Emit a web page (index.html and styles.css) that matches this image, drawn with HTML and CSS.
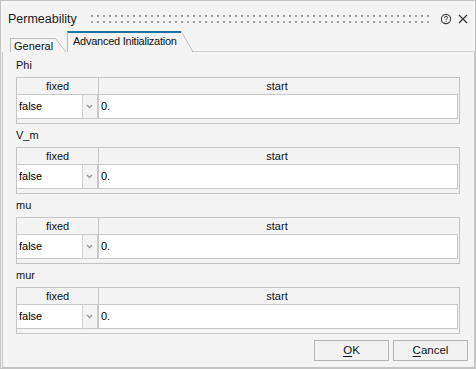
FILE: index.html
```html
<!DOCTYPE html>
<html>
<head>
<meta charset="utf-8">
<link rel="stylesheet" href="styles.css">
</head>
<body>
<div class="dialog">
  <div class="titlebar">
    <span class="title">Permeability</span>
    <div class="grip"></div>
    <svg class="help" width="12" height="12" viewBox="0 0 12 12">
      <circle cx="6" cy="6" r="4.6" fill="none" stroke="#3a3a3a" stroke-width="1.1"/>
      <path d="M4.4 4.9 Q4.4 3.4 6 3.4 Q7.6 3.4 7.6 4.7 Q7.6 5.6 6.6 5.9 Q6 6.1 6 7" fill="none" stroke="#3a3a3a" stroke-width="1"/>
      <rect x="5.5" y="7.7" width="1" height="1" fill="#3a3a3a"/>
    </svg>
    <svg class="close" width="10" height="10" viewBox="0 0 10 10">
      <path d="M1 1 L9 9 M9 1 L1 9" stroke="#333" stroke-width="1.2" fill="none"/>
    </svg>
  </div>
  <div class="tabbar">
    <div class="tab">General</div>
    <div class="tab active">Advanced Initialization</div>
    <div class="tabfill"></div>
  </div>
  <div class="pane">
    <div class="section">
      <div class="label">Phi</div>
      <div class="grid">
        <div class="head"><div class="hcell fixed">fixed</div><div class="hcell start">start</div></div>
        <div class="row"><div class="combo">false</div><div class="arrow"><svg width="7" height="5" viewBox="0 0 7 5"><path d="M1 1 L3.5 3.5 L6 1" stroke="#9a9a9a" stroke-width="1.3" fill="none"/></svg></div><div class="input">0.</div></div>
      </div>
    </div>
    <div class="section">
      <div class="label">V_m</div>
      <div class="grid">
        <div class="head"><div class="hcell fixed">fixed</div><div class="hcell start">start</div></div>
        <div class="row"><div class="combo">false</div><div class="arrow"><svg width="7" height="5" viewBox="0 0 7 5"><path d="M1 1 L3.5 3.5 L6 1" stroke="#9a9a9a" stroke-width="1.3" fill="none"/></svg></div><div class="input">0.</div></div>
      </div>
    </div>
    <div class="section">
      <div class="label">mu</div>
      <div class="grid">
        <div class="head"><div class="hcell fixed">fixed</div><div class="hcell start">start</div></div>
        <div class="row"><div class="combo">false</div><div class="arrow"><svg width="7" height="5" viewBox="0 0 7 5"><path d="M1 1 L3.5 3.5 L6 1" stroke="#9a9a9a" stroke-width="1.3" fill="none"/></svg></div><div class="input">0.</div></div>
      </div>
    </div>
    <div class="section">
      <div class="label">mur</div>
      <div class="grid">
        <div class="head"><div class="hcell fixed">fixed</div><div class="hcell start">start</div></div>
        <div class="row"><div class="combo">false</div><div class="arrow"><svg width="7" height="5" viewBox="0 0 7 5"><path d="M1 1 L3.5 3.5 L6 1" stroke="#9a9a9a" stroke-width="1.3" fill="none"/></svg></div><div class="input">0.</div></div>
      </div>
    </div>
    <div class="buttons">
      <div class="btn"><u>O</u>K</div>
      <div class="btn"><u>C</u>ancel</div>
    </div>
  </div>
</div>
</body>
</html>
```
FILE: styles.css
```css
* { box-sizing: border-box; }
html, body { margin: 0; padding: 0; background: #f4f4f4; }
body {
  font-family: "Liberation Sans", Arial, sans-serif;
  font-size: 11px;
  color: #000;
}
.dialog {
  width: 476px;
  height: 369px;
  border: 1px solid #c4c4c4;
  background: #f4f4f4;
  display: flex;
  flex-direction: column;
}
.titlebar {
  height: 30px;
  display: flex;
  align-items: center;
  padding-left: 7px;
  padding-top: 5px;
}
.title {
  font-size: 12.5px;
  color: #1a1a1a;
  width: 83px;
}
.grip {
  width: 338px;
  height: 8px;
  background:
    linear-gradient(to right, #a0a0a0 2px, transparent 2px) 0 0 / 6px 2px repeat-x,
    linear-gradient(to right, #a0a0a0 2px, transparent 2px) 0 6px / 6px 2px repeat-x;
}
.help { margin-left: 11px; }
.close { margin-left: 6px; }
.tabbar {
  height: 21px;
  display: flex;
  align-items: flex-end;
  padding-left: 9px;
}
.tab {
  position: relative;
  height: 14px;
  border-left: 1px solid #bcbcbc;
  border-top: 1px solid #bcbcbc;
  padding-left: 3px;
  width: 45px;
  margin-right: 12px;
  line-height: 14px;
  color: #111;
  white-space: nowrap;
}
.tab::after {
  content: "";
  position: absolute;
  left: 100%;
  top: -1px;
  bottom: 0;
  width: 11px;
  background: linear-gradient(to top right, transparent calc(50% - 0.7px), #b8b8b8 50%, transparent calc(50% + 0.7px));
}
.tab.active {
  height: 21px;
  width: 114px;
  border-top: 2px solid #1d72aa;
  padding-left: 5px;
  line-height: 16px;
  margin-right: 11px;
  letter-spacing: -0.25px;
}
.tab.active::after { top: -2px; width: 12px; }
.tabfill {
  flex: 1;
  height: 1px;
  background: #d2d2d2;
}
.pane {
  flex: 1;
  margin-left: 1px;
  border-left: 1px solid #c8c8c8;
  border-right: 1px solid #c8c8c8;
  border-bottom: 1px solid #c4c4c4;
  padding: 5px 6px 6px 13px;
  display: flex;
  flex-direction: column;
}
.section { margin-bottom: 3px; }
.label {
  height: 16px;
  line-height: 16px;
  margin-bottom: 4px;
  color: #111;
}
.grid {
  width: 444px;
  height: 47px;
  border: 1px solid #c4c4c4;
  background: #f4f4f4;
}
.head {
  display: flex;
  height: 16px;
}
.hcell {
  text-align: center;
  line-height: 16px;
  color: #111;
}
.hcell.fixed { width: 82px; border-right: 1px solid #c8c8c8; }
.hcell.start { flex: 1; padding-right: 4px; }
.row {
  display: flex;
  height: 25px;
  padding-right: 1px;
}
.combo, .arrow, .input {
  border-top: 1px solid #c8c8c8;
  border-bottom: 1px solid #c8c8c8;
  line-height: 22px;
}
.combo {
  width: 66px;
  background: #fff;
  border-right: 1px solid #d0d0d0;
  padding-left: 2px;
}
.arrow {
  width: 15px;
  border-right: 1px solid #c8c8c8;
  display: flex;
  align-items: center;
  justify-content: center;
  padding-right: 1px;
}
.input {
  flex: 1;
  background: #fff;
  border-left: 1px solid #c8c8c8;
  border-right: 1px solid #c8c8c8;
  padding-left: 2px;
}
.buttons {
  margin-top: auto;
  display: flex;
  justify-content: flex-end;
  gap: 4px;
}
.btn {
  width: 75px;
  height: 21px;
  border: 1px solid #b4b4b4;
  background: #f2f2f2;
  text-align: center;
  line-height: 19px;
  font-size: 11.5px;
  color: #111;
}
.btn u { text-decoration-thickness: 1px; text-underline-offset: 2px; }
```
